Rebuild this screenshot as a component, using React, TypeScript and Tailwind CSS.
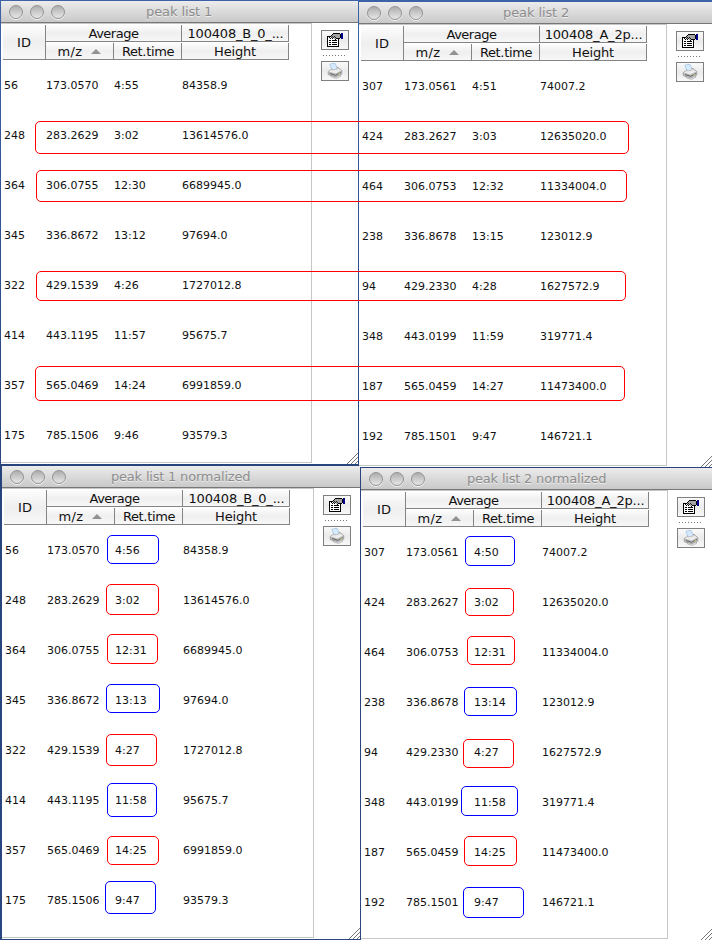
import React from "react";

type Row = [string, string, string, string];

const rows1: Row[] = [
  ["56", "173.0570", "4:55", "84358.9"],
  ["248", "283.2629", "3:02", "13614576.0"],
  ["364", "306.0755", "12:30", "6689945.0"],
  ["345", "336.8672", "13:12", "97694.0"],
  ["322", "429.1539", "4:26", "1727012.8"],
  ["414", "443.1195", "11:57", "95675.7"],
  ["357", "565.0469", "14:24", "6991859.0"],
  ["175", "785.1506", "9:46", "93579.3"],
];
const rows2: Row[] = [
  ["307", "173.0561", "4:51", "74007.2"],
  ["424", "283.2627", "3:03", "12635020.0"],
  ["464", "306.0753", "12:32", "11334004.0"],
  ["238", "336.8678", "13:15", "123012.9"],
  ["94", "429.2330", "4:28", "1627572.9"],
  ["348", "443.0199", "11:59", "319771.4"],
  ["187", "565.0459", "14:27", "11473400.0"],
  ["192", "785.1501", "9:47", "146721.1"],
];
const withTimes = (rows: Row[], times: string[]): Row[] =>
  rows.map((r, i) => [r[0], r[1], times[i], r[3]]);
const rows3 = withTimes(rows1, ["4:56", "3:02", "12:31", "13:13", "4:27", "11:58", "14:25", "9:47"]);
const rows4 = withTimes(rows2, ["4:50", "3:02", "12:31", "13:14", "4:27", "11:58", "14:25", "9:47"]);

function Light() {
  return (
    <span className="h-[14px] w-[14px] rounded-full border border-[#939393] bg-linear-to-b from-[#adadad] via-[#cbcbcb] to-[#e6e6e6] shadow-[0_1px_0_#f4f4f4]" />
  );
}

function PropertiesIcon() {
  return (
    <svg width="16" height="14" viewBox="0 0 16 14" shapeRendering="crispEdges">
      <path d="M0 3h12v11H0z" fill="#000" />
      <path d="M1 4h10v9H1z" fill="#fff" />
      <path d="M2 7h2v1H2zM5 7h5v1H5zM2 9h2v1H2zM5 9h5v1H5zM2 11h2v1H2zM5 11h5v1H5z" fill="#000" />
      <path d="M2 4h1v1H2zM3 3h1v1H3zM4 2h1v1H4zM5 1h1v1H5zM6 0h7v1H6zM13 1h1v4h-1zM9 5h4v1H9zM8 6h1v1H8zM3 5h1v1H3zM5 5h1v1H5z" fill="#000" />
      <path d="M6 1h7v4H9v1H7V5H4V3h1V2h1z" fill="#a5a5a5" />
      <path d="M4 4h1v1H4zM5 3h1v1H5zM6 4h1v1H6zM7 3h1v1H7zM8 4h1v1H8z" fill="#222" />
      <path d="M14 0h2v6h-2z" fill="#00008b" />
    </svg>
  );
}

function PrinterIcon() {
  return (
    <svg width="16" height="16" viewBox="0 0 16 16">
      <path d="M2.8 1.2l5.2-.9 2.5 5.6-5.2 1.5z" fill="#cfe6fd" stroke="#8fb7dd" strokeWidth=".7" />
      <path d="M1.2 8.5l3.8-2.4 6-1.7 3.8 3.1v3.6l-5.8 3.6-7.8-3.1z" fill="#b9b9b9" stroke="#8d8d8d" strokeWidth=".6" />
      <path d="M1.6 8.6L5 6.6l.5 1 5-1.4.2-1.2 3.5 2.5-5.5 3.1z" fill="#ededed" />
      <path d="M3.4 1.6l4.4-.8 2 4.7-4.1 1.2z" fill="#d6eafe" />
      <path d="M3 10.5l5.7 1.8 5.2-2.8" fill="none" stroke="#676767" strokeWidth="1" />
      <path d="M4 12.4l5 1.6 4-2.2 1 1.2-4.6 2.4-5-1.5z" fill="#ececec" stroke="#888" strokeWidth=".5" />
      <path d="M11.4 11.2l1.6-.8" stroke="#d9cf62" strokeWidth="1" />
    </svg>
  );
}

function ToolButton({ children }: { children: React.ReactNode }) {
  return (
    <div className="flex h-5 w-7 items-center justify-center border border-[#7f7f7f] bg-linear-to-b from-[#fafafa] via-[#ebebeb] to-[#f8f8f8]">
      {children}
    </div>
  );
}

const cell =
  "flex items-center justify-center whitespace-nowrap border-b border-r border-[#848484] bg-linear-to-b from-[#fdfdfd] via-[#efefef] to-[#f7f7f7] text-[13px] leading-none text-[#111]";

interface WindowProps {
  title: string;
  sample: string;
  rows: Row[];
  place: string;
  pane: string;
  titleShift: string;
}

function PeakWindow({ title, sample, rows, place, pane, titleShift }: WindowProps) {
  return (
    <section className={`absolute flex flex-col overflow-hidden bg-white ${place}`}>
      <header className="flex h-[22px] shrink-0 items-center border-b border-[#777] bg-linear-to-b from-[#ececec] to-[#c9c9c9]">
        <div className="flex w-[70px] shrink-0 gap-[7px] pl-2">
          <Light />
          <Light />
          <Light />
        </div>
        <h1 className={`whitespace-nowrap pt-px text-[13px] leading-5 text-[#8d8d8d] [text-shadow:0_1px_0_#eee] ${titleShift}`}>{title}</h1>
      </header>
      <div className="flex min-h-0 flex-1">
        <div className={`shrink-0 border-b border-r border-t border-[#c6c6c6] pl-[2px] pt-px ${pane}`}>
          <div className="flex h-[35px]">
            <div className={`${cell} w-[43px]`}>ID</div>
            <div className="flex w-[136px] flex-col gap-px">
              <div className={`${cell} h-[17px] tracking-[-0.5px]`}>Average</div>
              <div className="flex h-[17px]">
                <div className={`${cell} w-[68px] gap-[9px]`}>
                  <span className="tracking-[0.3px]">m/z</span>
                  <span className="h-0 w-0 border-x-[5px] border-b-[5px] border-x-transparent border-b-[#929292]" />
                </div>
                <div className={`${cell} w-[68px] pl-px tracking-[-0.35px]`}>Ret.time</div>
              </div>
            </div>
            <div className="flex w-[107px] flex-col gap-px">
              <div className={`${cell} h-[17px] pl-px tracking-[-0.2px]`}>{sample}</div>
              <div className={`${cell} h-[17px] tracking-[-0.2px]`}>Height</div>
            </div>
          </div>
          <div className="pt-px text-[11px] leading-[50px] text-[#111]">
            {rows.map((r) => (
              <div key={r[0]} className="flex h-[50px] whitespace-nowrap pl-px">
                <span className="w-[42px]">{r[0]}</span>
                <span className="w-[68px]">{r[1]}</span>
                <span className="w-[68px]">{r[2]}</span>
                <span>{r[3]}</span>
              </div>
            ))}
          </div>
        </div>
        <div className="flex flex-col items-start pl-[9px] pt-[7px]">
          <ToolButton><PropertiesIcon /></ToolButton>
          <div className="ml-[2px] h-[11px] w-[23px] pt-[5px]">
            <div className="h-px bg-[repeating-linear-gradient(90deg,#777_0px,#777_1px,transparent_1px,transparent_3px)]" />
          </div>
          <ToolButton><PrinterIcon /></ToolButton>
        </div>
      </div>
      <svg className="absolute bottom-0 right-0" width="11" height="11" viewBox="0 0 11 11">
        <path d="M0 11L11 0M4 11l7-7M8 11l3-3" stroke="#777" strokeWidth="1" />
      </svg>
    </section>
  );
}

const red = "border-[#ff0000]";
const blue = "border-[#0000ff]";
const outlines = [
  `left-[35px] top-[121px] w-[594px] h-[33px] ${red}`,
  `left-[36px] top-[170px] w-[591px] h-[32px] ${red}`,
  `left-[36px] top-[271px] w-[590px] h-[30px] ${red}`,
  `left-[35px] top-[366px] w-[590px] h-[35px] ${red}`,
  `left-[107px] top-[535px] w-[52px] h-[29px] ${blue}`,
  `left-[106px] top-[584px] w-[53px] h-[31px] ${red}`,
  `left-[107px] top-[634px] w-[51px] h-[30px] ${red}`,
  `left-[106px] top-[684px] w-[54px] h-[29px] ${blue}`,
  `left-[106px] top-[734px] w-[51px] h-[32px] ${red}`,
  `left-[107px] top-[783px] w-[50px] h-[34px] ${blue}`,
  `left-[107px] top-[836px] w-[52px] h-[29px] ${red}`,
  `left-[105px] top-[881px] w-[51px] h-[33px] ${blue}`,
  `left-[465px] top-[536px] w-[50px] h-[30px] ${blue}`,
  `left-[465px] top-[588px] w-[49px] h-[28px] ${red}`,
  `left-[467px] top-[636px] w-[48px] h-[29px] ${red}`,
  `left-[464px] top-[687px] w-[53px] h-[29px] ${blue}`,
  `left-[463px] top-[739px] w-[51px] h-[29px] ${red}`,
  `left-[461px] top-[786px] w-[57px] h-[30px] ${blue}`,
  `left-[464px] top-[836px] w-[53px] h-[30px] ${red}`,
  `left-[463px] top-[887px] w-[61px] h-[31px] ${blue}`,
];

export default function App() {
  return (
    <main className="relative h-[940px] w-[712px] overflow-hidden bg-linear-to-b from-[#3c61a8] via-[#27457c] to-[#2a4580] font-['DejaVu_Sans',sans-serif]">
      <PeakWindow title="peak list 1" sample="100408_B_0_..." rows={rows1} place="left-px top-px w-[357px] h-[463px]" pane="w-[311px] h-[440px]" titleShift="ml-[75px] tracking-[-0.1px]" />
      <PeakWindow title="peak list 2" sample="100408_A_2p..." rows={rows2} place="left-[359px] top-[2px] w-[353px] h-[465px]" pane="w-[308px] h-[442px]" titleShift="ml-[74px] tracking-[-0.1px]" />
      <PeakWindow title="peak list 1 normalized" sample="100408_B_0_..." rows={rows3} place="left-[2px] top-[466px] w-[358px] h-[473px]" pane="w-[312px] h-[450px]" titleShift="ml-[39px] tracking-[-0.2px]" />
      <PeakWindow title="peak list 2 normalized" sample="100408_A_2p..." rows={rows4} place="left-[361px] top-[468px] w-[351px] h-[472px]" pane="w-[307px] h-[449px]" titleShift="ml-[36px] tracking-[-0.2px]" />
      {outlines.map((o) => (
        <div key={o} className={`absolute rounded-[5px] border ${o}`} />
      ))}
    </main>
  );
}
